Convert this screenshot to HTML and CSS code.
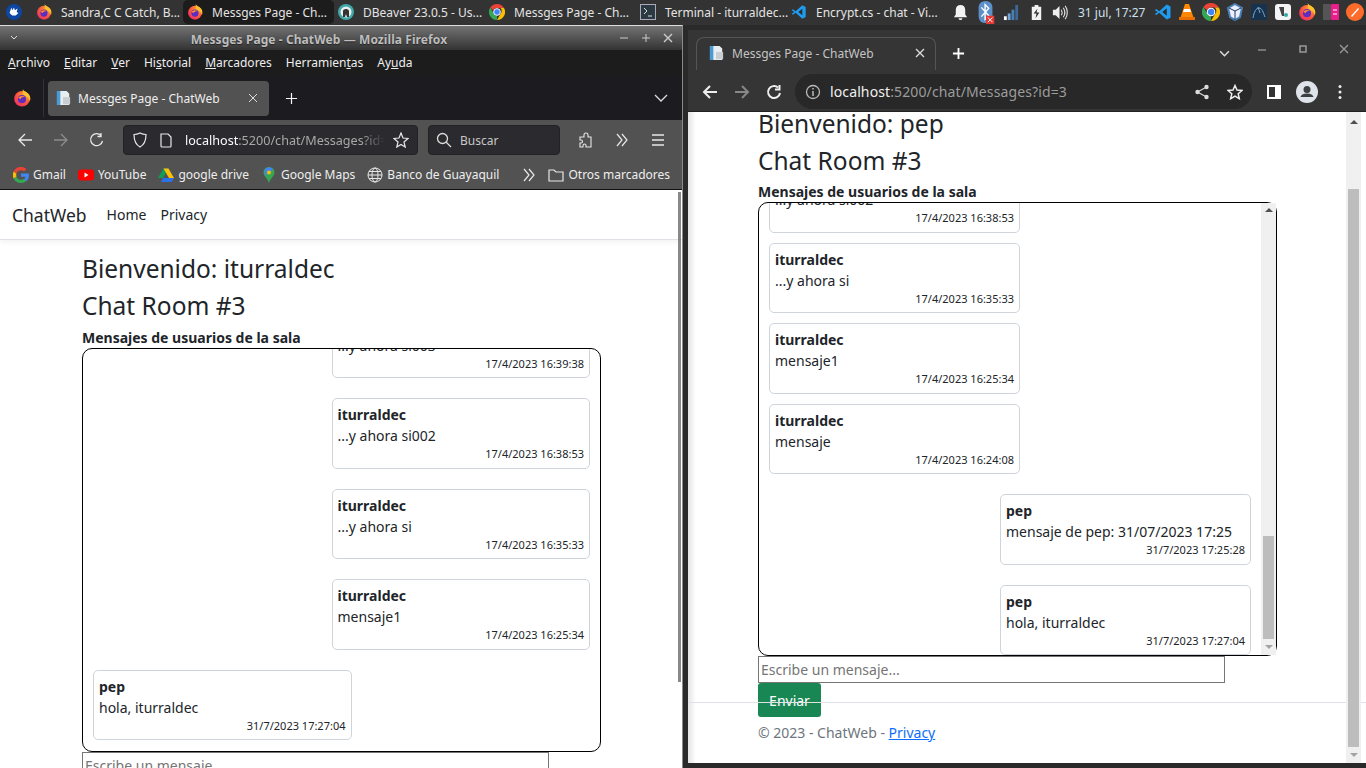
FILE: index.html
```html
<!DOCTYPE html>
<html lang="es">
<head>
<meta charset="utf-8">
<title>Messges Page - ChatWeb</title>
<link rel="stylesheet" href="styles.css">
</head>
<body>
<svg class="defs" aria-hidden="true">
  <defs>
    <radialGradient id="ffg" cx="0.7" cy="0.25" r="0.95"><stop offset="0" stop-color="#ffb02e"/><stop offset="0.5" stop-color="#ff5a3c"/><stop offset="1" stop-color="#e3226f"/></radialGradient>
    <symbol id="ff" viewBox="1.500 1 21 23"><circle cx="12" cy="13.500" r="10" fill="url(#ffg)"/><path d="M13 1c1 3 5 3 8 7 2 3 2 6 1 9-1-4-3-6-6-7-3-1-3-5-3-9z" fill="#ffc02e"/><circle cx="12" cy="14" r="5.200" fill="#5f2cc0"/><path d="M7 12c2-2 6-3 9-1-3 0-5 1-6 3z" fill="#ff8a2e"/></symbol>
    <symbol id="chrome" viewBox="2 2 20 20"><path d="M12 2a10 10 0 0 1 8.700 5H12a5 5 0 0 0-4.600 3L3.600 6.500A10 10 0 0 1 12 2z" fill="#ea4335"/><path d="M20.700 7A10 10 0 0 1 12 22l4.300-7.500a5 5 0 0 0-.1-7.500z" fill="#fbbc04"/><path d="M3.600 6.500 7.900 14a5 5 0 0 0 4.100 3l-.1 5A10 10 0 0 1 3.600 6.500z" fill="#34a853"/><circle cx="12" cy="12" r="4.200" fill="#4285f4" stroke="#fff" stroke-width="1.200"/></symbol>
    <symbol id="vscode" viewBox="0 0 24 24"><path d="M17 2 22 4.500v15L17 22 7 13l-4 3-2-1.500L5 12 1 9.500 3 8l4 3z" fill="#1f9cf0"/><path d="M17 7v10l-6-5z" fill="#2b2b2b"/></symbol>
    <symbol id="doc" viewBox="0 0 18 18"><path d="M2 1h8l3 3v13H2z" fill="#4a9ad4"/><path d="M6 1h7l3 3v13H6z" fill="#e8edf0"/><path d="M9 8h8v8H9z" fill="#c8ced2"/></symbol>
    <symbol id="g" viewBox="2 2 20 20"><path d="M22 12.200c0-.8-.1-1.400-.2-2H12v3.900h5.600a5 5 0 0 1-2.100 3.200l3.300 2.500c2-1.800 3.200-4.500 3.200-7.600z" fill="#4285f4"/><path d="M12 22c2.800 0 5-.9 6.800-2.500l-3.300-2.500c-.9.600-2.100 1-3.500 1a6 6 0 0 1-5.700-4.200l-3.400 2.600A10 10 0 0 0 12 22z" fill="#34a853"/><path d="M6.300 13.800a6 6 0 0 1 0-3.700L2.900 7.500a10 10 0 0 0 0 9z" fill="#fbbc05"/><path d="M12 6a5.500 5.500 0 0 1 3.800 1.500l2.900-2.900A10 10 0 0 0 2.900 7.500l3.400 2.600A6 6 0 0 1 12 6z" fill="#ea4335"/></symbol>
  </defs>
</svg>

<header class="taskbar">
  <svg class="start" viewBox="0 0 18 18"><circle cx="9" cy="9" r="9" fill="#0d47a1"/><path d="M4 10l2-6 1 3 2-3 1 3 3-2-1 4 2 1-3 3H7z" fill="#fff"/></svg>
  <div class="tasks">
    <div class="task"><svg class="ic16"><use href="#ff"/></svg><span>Sandra,C C Catch, B...</span></div>
    <div class="task on"><svg class="ic16"><use href="#ff"/></svg><span>Messges Page - Ch...</span></div>
    <div class="task"><svg class="ic16" viewBox="0 0 16 16"><circle cx="8" cy="8" r="8" fill="#3fa9a9"/><circle cx="8" cy="8" r="5.500" fill="#eee"/><path d="M5 13V7c0-2 5-3 6 0v6H9l-1-3-1 3z" fill="#333"/></svg><span>DBeaver 23.0.5 - Us...</span></div>
    <div class="task"><svg class="ic16"><use href="#chrome"/></svg><span>Messges Page - Ch...</span></div>
    <div class="task"><svg class="ic16" viewBox="0 0 16 16"><rect x="0.500" y="0.500" width="15" height="15" fill="#2b3a42" stroke="#aab"/><path d="M4 4l3 3-3 3M8 12h4" fill="none" stroke="#ddd"/></svg><span>Terminal - iturraldec...</span></div>
    <div class="task"><svg class="ic16"><use href="#vscode"/></svg><span>Encrypt.cs - chat - Vi...</span></div>
  </div>
  <div class="tray">
    <svg class="ic18" viewBox="0 0 18 18"><path d="M9 1c-3 0-5 2-5 5v5l-2 3h14l-2-3V6c0-3-2-5-5-5zM7 15h4a2 2 0 0 1-4 0z" fill="#f2f2f2"/></svg>
    <svg class="bt" viewBox="0 0 18 26"><rect x="1" y="1" width="15" height="24" rx="7" fill="#5d8fc9"/><path d="M4 8l8 9-4 4V5l4 4-8 9" fill="none" stroke="#fff" stroke-width="1.500"/><rect x="9" y="17" width="9" height="9" fill="#e53935"/><path d="M11 19l5 5m0-5-5 5" stroke="#fff"/></svg>
    <svg class="ic18" viewBox="0 0 18 18"><path d="M1 13h3v4H1z" fill="#fff"/><path d="M5 10h3v7H5z" fill="#6fa8dc"/><path d="M9 6h3v11H9z" fill="#4a7fb5"/><path d="M13 1h3v16h-3z" fill="#3b6896"/></svg>
    <svg class="ic18" viewBox="0 0 18 18"><path d="M7 1h4v2h3v14H4V3h3z" fill="#f2f2f2"/><path d="M10 5 6 10h3l-1 5 4-6H9z" fill="#2b2b2b"/></svg>
    <svg class="ic18 snd" viewBox="0 0 18 18"><path d="M2 6h3l4-4v14l-4-4H2z" fill="#eee"/><path d="M11 6c1 2 1 4 0 6m2-8c2 3 2 7 0 10m2-12c3 4 3 10 0 14" fill="none" stroke="#ddd" stroke-width="1.200"/></svg>
    <span class="clock">31 jul, 17:27</span>
    <div class="apps">
      <svg class="ic18"><use href="#vscode"/></svg>
      <svg class="ic18" viewBox="0 0 18 18"><path d="M7 1h4l5 15H2z" fill="#ff8800"/><path d="M6 6h6l1 3H5z" fill="#fff"/><rect x="1" y="14" width="16" height="3" fill="#e66f00"/></svg>
      <svg class="ic18"><use href="#chrome"/></svg>
      <svg class="ic18" viewBox="0 0 18 18"><path d="M9 1l7 4-2 9-5 3-5-3-2-9z" fill="#eef" stroke="#4a7fb5" stroke-width="2"/><path d="M9 8 3 5m6 3 6-3m-6 3v9" stroke="#183a61"/></svg>
      <svg class="ic18" viewBox="0 0 18 18"><rect x="1" y="1" width="16" height="16" rx="2" fill="#16324f"/><path d="M3 15c1-6 3-10 6-10s4 4 6 9M8 4l2 6" fill="none" stroke="#7fa7c9"/></svg>
      <svg class="ic18" viewBox="0 0 18 18"><rect x="1" y="1" width="16" height="16" rx="3" fill="#f4f4f4"/><path d="M5 4l3 9h2V4z" fill="#444"/><circle cx="12" cy="12" r="2" fill="#3aa"/></svg>
      <svg class="ic18"><use href="#ff"/></svg>
      <svg class="ic18" viewBox="0 0 18 18"><rect x="1" y="1" width="8" height="16" rx="1" fill="#555"/><rect x="9" y="1" width="8" height="16" rx="1" fill="#e91e8c"/><path d="M11 7h4M11 11h4" stroke="#fff"/></svg>
      <svg class="ic18" viewBox="0 0 18 18"><circle cx="9" cy="9" r="9" fill="#ff6b2b"/><path d="M5 13 12 5l1 1-7 8z" fill="#fff"/></svg>
    </div>
  </div>
</header>

<section class="win win-ff">
  <div class="titlebar">
    <svg class="wc" viewBox="0 0 10 10"><path d="M2 3l3 3 3-3" fill="none" stroke="#ddd"/></svg>
    <span class="title">Messges Page - ChatWeb — Mozilla Firefox</span>
    <svg class="wc" viewBox="0 0 10 10"><path d="M1 5h8" stroke="#ccc"/></svg>
    <svg class="wc" viewBox="0 0 10 10"><path d="M1 5h8M5 1v8" stroke="#ccc"/></svg>
    <svg class="wc" viewBox="0 0 10 10"><path d="M1 1l8 8m0-8-8 8" stroke="#ccc" stroke-width="1.400"/></svg>
  </div>
  <nav class="menubar">
    <span><u>A</u>rchivo</span><span><u>E</u>ditar</span><span><u>V</u>er</span><span>Hi<u>s</u>torial</span><span><u>M</u>arcadores</span><span>Herramien<u>t</u>as</span><span>Ay<u>u</u>da</span>
  </nav>
  <div class="ff-tabs">
    <div class="ff-home"><svg class="ic18"><use href="#ff"/></svg></div>
    <div class="ff-tab">
      <svg class="ic16"><use href="#doc"/></svg><span>Messges Page - ChatWeb</span>
      <svg class="ic10 push" viewBox="0 0 10 10"><path d="M1 1l8 8m0-8-8 8" stroke="#ddd"/></svg>
    </div>
    <svg class="ff-plus" viewBox="0 0 14 14"><path d="M7 1v12M1 7h12" stroke="#f5f5f5" stroke-width="1.300"/></svg>
    <svg class="ff-chev" viewBox="0 0 14 14"><path d="M1 4l6 6 6-6" fill="none" stroke="#ddd" stroke-width="1.300"/></svg>
  </div>
  <div class="ff-toolbar">
    <svg class="tb" viewBox="0 0 16 16"><path d="M15 8H2m6-6L2 8l6 6" fill="none" stroke="#e8e8e8" stroke-width="1.300"/></svg>
    <svg class="tb" viewBox="0 0 16 16"><path d="M1 8h13M8 2l6 6-6 6" fill="none" stroke="#8d8d8d" stroke-width="1.300"/></svg>
    <svg class="tb" viewBox="0 0 16 16"><path d="M13.500 9A6 6 0 1 1 12 3.500M12 1v3.500H8.500" fill="none" stroke="#e8e8e8" stroke-width="1.300"/></svg>
    <div class="ff-url">
      <svg class="ic16" viewBox="0 0 16 16"><path d="M8 1c2 1 4 1.500 6 1.500 0 6-1.500 10-6 12.500C3.500 12.500 2 8.500 2 2.500 4 2.500 6 2 8 1z" fill="none" stroke="#e8e8e8" stroke-width="1.200"/></svg>
      <svg class="ic16" viewBox="0 0 16 16"><path d="M3 2h7l3 3v9a1 1 0 0 1-1 1H4a1 1 0 0 1-1-1z" fill="none" stroke="#e8e8e8" stroke-width="1.200"/></svg>
      <span class="ff-addr">localhost<em>:5200/chat/Messages?id=</em></span>
      <svg class="ic16" viewBox="0 0 16 16"><path d="M8 1l2 5 5 .5-4 3.500 1.200 5L8 12.500 3.800 15 5 10 1 6.500 6 6z" fill="none" stroke="#e8e8e8" stroke-width="1.200"/></svg>
    </div>
    <div class="ff-search">
      <svg class="ic16" viewBox="0 0 16 16"><circle cx="6.500" cy="6.500" r="5" fill="none" stroke="#ddd" stroke-width="1.300"/><path d="M10 10l5 5" stroke="#ddd" stroke-width="1.300"/></svg>
      <span>Buscar</span>
    </div>
    <svg class="tb tb-ext" viewBox="0 0 16 16"><path d="M2 5h4V3a2 2 0 0 1 4 0v2h3v10H8v-1.500a1.500 1.500 0 0 0-3 0V15H2v-4h1a1.500 1.500 0 0 0 0-3H2z" fill="none" stroke="#e8e8e8" stroke-width="1.100"/></svg>
    <svg class="tb" viewBox="0 0 16 16"><path d="M3 2l5 6-5 6M8 2l5 6-5 6" fill="none" stroke="#e8e8e8" stroke-width="1.200"/></svg>
    <svg class="tb" viewBox="0 0 16 16"><path d="M2 3h12M2 8h12M2 13h12" stroke="#e8e8e8" stroke-width="1.300"/></svg>
  </div>
  <div class="ff-bookmarks">
    <div class="bm"><svg class="ic16"><use href="#g"/></svg><span>Gmail</span></div>
    <div class="bm"><svg class="ic16" viewBox="0 0 16 16"><rect y="2.500" width="16" height="11" rx="3" fill="#f00"/><path d="M6.500 5.500v5l4-2.500z" fill="#fff"/></svg><span>YouTube</span></div>
    <div class="bm"><svg class="ic16" viewBox="0 0 16 16"><path d="M5.500 1.500h5L5 11H0z" fill="#0f9d58"/><path d="M10.500 1.500 16 11h-5L5.500 1.500z" fill="#ffc107"/><path d="M3 15l2-4h11l-2.500 4z" fill="#2a71ea"/></svg><span>google drive</span></div>
    <div class="bm"><svg class="ic16" viewBox="0 0 16 16"><path d="M8 0a5.500 5.500 0 0 1 5.500 5.500C13.500 9 9.500 11 8 16 6.500 11 2.500 9 2.500 5.500A5.500 5.500 0 0 1 8 0z" fill="#34a853"/><path d="M4 2a5.500 5.500 0 0 1 8 0L4 9z" fill="#4285f4"/><circle cx="8" cy="5.500" r="2" fill="#fbbc04"/></svg><span>Google Maps</span></div>
    <div class="bm"><svg class="ic16" viewBox="0 0 16 16"><g fill="none" stroke="#e8e8e8"><circle cx="8" cy="8" r="7"/><ellipse cx="8" cy="8" rx="3" ry="7"/><path d="M1 8h14M2 4.500h12M2 11.500h12"/></g></svg><span>Banco de Guayaquil</span></div>
    <svg class="ic16 bm-more" viewBox="0 0 16 16"><path d="M3 2l5 6-5 6M8 2l5 6-5 6" fill="none" stroke="#e8e8e8" stroke-width="1.200"/></svg>
    <div class="bm"><svg class="ic16" viewBox="0 0 16 16"><path d="M1 3h5l2 2h7v9H1z" fill="none" stroke="#e8e8e8" stroke-width="1.200"/></svg><span>Otros marcadores</span></div>
  </div>
  <main class="page page-ff">
    <div class="site-nav">
      <span class="brand">ChatWeb</span><a class="nl">Home</a><a class="nl">Privacy</a>
    </div>
    <div class="wrap wrap-ff">
      <h3>Bienvenido: iturraldec</h3>
      <h3>Chat Room #3</h3>
      <div class="label">Mensajes de usuarios de la sala</div>
      <div class="box box-ff">
        <div class="msgs pad">
          <article class="card r"><b>iturraldec</b><p>...y ahora si003</p><time>17/4/2023 16:39:38</time></article>
          <article class="card r"><b>iturraldec</b><p>...y ahora si002</p><time>17/4/2023 16:38:53</time></article>
          <article class="card r"><b>iturraldec</b><p>...y ahora si</p><time>17/4/2023 16:35:33</time></article>
          <article class="card r"><b>iturraldec</b><p>mensaje1</p><time>17/4/2023 16:25:34</time></article>
          <article class="card"><b>pep</b><p>hola, iturraldec</p><time>31/7/2023 17:27:04</time></article>
        </div>
      </div>
      <input class="msg-input" placeholder="Escribe un mensaje...">
    </div>
    <div class="overlay-sb"></div>
  </main>
</section>

<section class="win win-ch">
  <div class="ch-tabs">
    <div class="ch-tab">
      <svg class="ic16"><use href="#doc"/></svg><span>Messges Page - ChatWeb</span>
      <svg class="ic10 push" viewBox="0 0 10 10"><path d="M1 1l8 8m0-8-8 8" stroke="#ddd" stroke-width="1.300"/></svg>
    </div>
    <svg class="ch-plus" viewBox="0 0 14 14"><path d="M7 1v12M1 7h12" stroke="#fff" stroke-width="2"/></svg>
    <svg class="ch-chev" viewBox="0 0 10 10"><path d="M1 3l4 4 4-4" fill="none" stroke="#ddd" stroke-width="1.400"/></svg>
    <svg class="ch-wc" viewBox="0 0 10 10"><path d="M1 6h8" stroke="#999" stroke-width="1.300"/></svg>
    <svg class="ch-wc" viewBox="0 0 10 10"><rect x="2" y="2" width="6" height="6" fill="none" stroke="#999" stroke-width="1.500"/></svg>
    <svg class="ch-wc" viewBox="0 0 10 10"><path d="M1 1l8 8m0-8-8 8" stroke="#999" stroke-width="1.300"/></svg>
  </div>
  <div class="ch-toolbar">
    <svg class="cb" viewBox="0 0 16 16"><path d="M15 8H2m6-6L2 8l6 6" fill="none" stroke="#eee" stroke-width="2"/></svg>
    <svg class="cb" viewBox="0 0 16 16"><path d="M1 8h13M8 2l6 6-6 6" fill="none" stroke="#888" stroke-width="2"/></svg>
    <svg class="cb" viewBox="0 0 16 16"><path d="M14 9A6 6 0 1 1 12 3.500M13.500 1v4.500H9" fill="none" stroke="#eee" stroke-width="2"/></svg>
    <div class="omni">
      <svg class="ic16" viewBox="0 0 16 16"><circle cx="8" cy="8" r="6.500" fill="none" stroke="#bbb" stroke-width="1.300"/><path d="M8 7v5M8 4v1.600" stroke="#bbb" stroke-width="1.500"/></svg>
      <span class="ch-addr">localhost<em>:5200/chat/Messages?id=3</em></span>
      <svg class="ic16 push" viewBox="0 0 16 16"><circle cx="3.500" cy="8" r="2.200" fill="#ddd"/><circle cx="12.500" cy="3" r="2.200" fill="#ddd"/><circle cx="12.500" cy="13" r="2.200" fill="#ddd"/><path d="M3.500 8l9-5m-9 5 9 5" stroke="#ddd" stroke-width="1.200"/></svg>
      <svg class="ic16 star" viewBox="0 0 16 16"><path d="M8 1.500l2 4.500 5 .5-3.800 3.300 1.100 4.900L8 12.200l-4.300 2.500 1.100-4.900L1 6.500 6 6z" fill="none" stroke="#eee" stroke-width="1.500"/></svg>
    </div>
    <svg class="ch-panel" viewBox="0 0 18 18"><rect x="2" y="2" width="14" height="14" fill="#fff"/><rect x="4" y="4" width="6" height="10" fill="#333"/></svg>
    <svg class="ch-avatar" viewBox="0 0 22 22"><circle cx="11" cy="11" r="11" fill="#dfe3ea"/><circle cx="11" cy="8.500" r="3.500" fill="#3c4043"/><path d="M4.500 16c1-3 4-3.500 6.500-3.500s5.500.5 6.500 3.500z" fill="#3c4043"/></svg>
    <svg class="ch-more" viewBox="0 0 4 16"><circle cx="2" cy="2.500" r="1.500" fill="#eee"/><circle cx="2" cy="8" r="1.500" fill="#eee"/><circle cx="2" cy="13.500" r="1.500" fill="#eee"/></svg>
  </div>
  <main class="page page-ch">
    <div class="wrap wrap-ch">
      <h3>Bienvenido: pep</h3>
      <h3>Chat Room #3</h3>
      <div class="label">Mensajes de usuarios de la sala</div>
      <div class="box box-ch">
        <div class="msgs">
          <article class="card tight"><b>iturraldec</b><p>...y ahora si002</p><time>17/4/2023 16:38:53</time></article>
          <article class="card tight"><b>iturraldec</b><p>...y ahora si</p><time>17/4/2023 16:35:33</time></article>
          <article class="card tight"><b>iturraldec</b><p>mensaje1</p><time>17/4/2023 16:25:34</time></article>
          <article class="card"><b>iturraldec</b><p>mensaje</p><time>17/4/2023 16:24:08</time></article>
          <article class="card r"><b>pep</b><p>mensaje de pep: 31/07/2023 17:25</p><time>31/7/2023 17:25:28</time></article>
          <article class="card r"><b>pep</b><p>hola, iturraldec</p><time>31/7/2023 17:27:04</time></article>
        </div>
        <div class="sb sb-box"><i class="up"></i><i class="thumb"></i><i class="down"></i></div>
      </div>
      <input class="msg-input" placeholder="Escribe un mensaje...">
      <button class="send">Enviar</button>
    </div>
    <footer class="foot">© 2023 - ChatWeb - <a class="lnk">Privacy</a></footer>
    <div class="sb sb-page"><i class="up"></i><i class="thumb"></i><i class="down"></i></div>
  </main>
</section>
</body>
</html>
```
FILE: styles.css
```css
* { box-sizing: border-box; }
html, body { margin: 0; height: 100%; }
body {
  position: relative;
  width: 1366px;
  height: 768px;
  overflow: hidden;
  background: #2a2a2a;
  font-family: "Noto Sans", "Open Sans", sans-serif;
  font-size: 12px;
}
svg { display: block; flex: none; }
.defs { position: absolute; width: 0; height: 0; }
.ic10 { width: 10px; height: 10px; }
.ic16 { width: 16px; height: 16px; }
.ic18 { width: 18px; height: 18px; }
.push { margin-left: auto; }
em { font-style: normal; }

/* taskbar */
.taskbar {
  height: 25px;
  background: #333;
  color: #e4e4e4;
  display: flex;
  align-items: flex-start;
  padding-left: 6px;
}
.start { width: 16px; height: 16px; margin: 4px 10px 0 0; }
.tasks { display: flex; width: 906px; }
.task {
  width: 151px;
  height: 24px;
  display: flex;
  align-items: center;
  gap: 9px;
  padding-left: 4px;
  border-radius: 5px;
  white-space: nowrap;
  font-size: 12px;
}
.task.on { background: #1c1c1c; }
.tray { display: flex; align-items: center; height: 24px; margin-left: 14px; gap: 8px; }
.tray > .ic18 { width: 17px; height: 17px; }
.tray > .snd { margin-left: -2px; margin-right: 2px; }
.bt { width: 18px; height: 24px; }
.clock { color: #cfe0ee; white-space: nowrap; font-size: 12px; margin-right: 1px; }
.apps { display: flex; gap: 6px; }

/* windows on the desktop */
.win { position: absolute; top: 25px; height: 743px; width: 683px; display: flex; flex-direction: column; }
.win-ff { left: 0; background: #1c1b1f; border-right: 1px solid #8a8a8a; border-top: 1px solid #ddd; }
.win-ch { left: 683px; background: #2a2a2a; padding: 5px 0 5px 5px; }

/* firefox */
.titlebar {
  height: 24px;
  flex: none;
  display: flex;
  align-items: center;
  gap: 12px;
  padding: 0 9px;
  background: linear-gradient(#737373, #333);
}
.wc { width: 10px; height: 10px; }
.title {
  flex: 1;
  text-align: center;
  color: #bdbdbd;
  font-weight: 700;
  font-size: 12px;
  letter-spacing: .08px;
  text-shadow: 0 1px 1px #222, 0 0 2px #555;
  padding-top: 2px;
  white-space: nowrap;
}
.menubar {
  height: 26px;
  flex: none;
  display: flex;
  align-items: center;
  gap: 14px;
  padding: 0 0 1px 8px;
  color: #eee;
  background: #1c1c1c;
}
.ff-tabs {
  height: 44px;
  flex: none;
  display: flex;
  align-items: center;
  background: #1c1b1f;
  color: #eee;
}
.ff-home { width: 44px; height: 38px; display: flex; align-items: center; justify-content: center; border-right: 1px solid #333; margin-right: 4px; }
.ff-tab {
  width: 221px;
  height: 35px;
  display: flex;
  align-items: center;
  gap: 7px;
  padding: 0 11px 0 7px;
  background: #525252;
  border-radius: 4px;
}
.ff-plus { width: 13px; height: 13px; margin-left: 16px; }
.ff-chev { width: 14px; height: 14px; margin-left: auto; margin-right: 14px; }
.ff-toolbar {
  height: 40px;
  flex: none;
  display: flex;
  align-items: center;
  background: #525252;
  padding-left: 17px;
  gap: 20px;
}
.tb { width: 16px; height: 16px; }
.ff-url {
  width: 295px;
  height: 30px;
  margin-left: -2px;
  display: flex;
  align-items: center;
  gap: 10px;
  padding: 0 8px;
  background: #2b2a2e;
  border: 1px solid #222;
  border-radius: 4px;
  color: #fbfbfe;
  white-space: nowrap;
}
.ff-addr {
  flex: 1;
  min-width: 0;
  overflow: hidden;
  font-size: 12.600px;
  margin-left: 1px;
  margin-right: -2px;
  -webkit-mask-image: linear-gradient(90deg, #000 88%, transparent);
  mask-image: linear-gradient(90deg, #000 88%, transparent);
}
.ff-addr em { color: #a8a8a8; }
.ff-search {
  width: 132px;
  height: 30px;
  margin-left: -10px;
  display: flex;
  align-items: center;
  gap: 8px;
  padding: 0 7px;
  background: #2b2a2e;
  border: 1px solid #222;
  border-radius: 4px;
  color: #c8c8c8;
}
.tb-ext { margin-left: -2px; }
.ff-bookmarks {
  height: 30px;
  flex: none;
  display: flex;
  align-items: center;
  gap: 12px;
  padding-left: 13px;
  background: #525252;
  border-bottom: 1px solid #111;
  color: #eee;
}
.bm { display: flex; align-items: center; gap: 4px; white-space: nowrap; }
.bm-more { margin-left: 10px; margin-right: -1px; }

/* web pages */
.page { position: relative; flex: 1; background: #fff; color: #212529; overflow: hidden; font-size: 14px; }
.site-nav {
  height: 50px;
  display: flex;
  align-items: center;
  padding-left: 12px;
  gap: 14px;
  border-bottom: 1px solid #dee2e6;
  box-shadow: 0 2px 6px rgba(0, 0, 0, .06);
}
.brand { font-size: 17.500px; margin-right: 6px; }
.nl { font-size: 14px; }
.wrap-ff { padding: 14px 0 0 82px; }
.wrap-ch { padding-left: 70px; margin-top: -3.500px; }
h3 { margin: 0 0 8px; font-size: 24.500px; font-weight: 400; line-height: 1.2; }
.label { font-weight: 700; line-height: 21px; margin-bottom: -.2px; }
.wrap-ff .label { margin-top: -2px; }
.wrap-ch .label { margin-top: -2.500px; }
.box { display: flex; width: 519px; border: 1px solid #000; border-radius: 10px; background: #fff; }
.box-ff { height: 404px; }
.box-ch { height: 454px; }
.msgs { flex: 1; min-width: 0; display: flex; flex-direction: column; justify-content: flex-end; overflow: hidden; padding: 0 10px; border-radius: 10px; }
.msgs.pad { padding-bottom: 10.500px; }
.card {
  flex: none;
  width: 258.500px;
  height: 70.500px;
  margin-bottom: 20px;
  padding: 5px;
  border: 1px solid #ced4da;
  border-radius: 5px;
  background: #fff;
}
.box-ch .card { width: 251px; }
.card:last-child { margin-bottom: 0; }
.box-ch .card:last-child { margin-bottom: -.5px; }
.card.tight { margin-bottom: 10px; }
.card.r { align-self: flex-end; }
.card b { display: block; line-height: 21px; }
.card p { margin: 0; line-height: 21px; }
.card time { display: block; text-align: right; font-size: 11px; line-height: 16.500px; }
.msg-input { display: block; width: 467px; height: 27px; padding: 1px 2px; border: 1px solid #767676; border-radius: 0; font: inherit; background: #fff; outline: 0; }
.msg-input::placeholder { color: #757575; }
.send {
  display: block;
  width: 63px;
  height: 34px;
  background: #198754;
  color: #fff;
  border: 0;
  border-radius: 3px;
  font: inherit;
  padding: 2px 0 0;
}
.foot {
  position: absolute;
  left: 0;
  right: 0;
  top: 590px;
  height: 61px;
  padding: 19px 0 0 70px;
  border-top: 1px solid #dee2e6;
  color: #6c757d;
  line-height: 21px;
}
.lnk { color: #0d6efd; text-decoration: underline; }
.page-ch::before {
  content: "";
  position: absolute;
  left: 0;
  top: 0;
  bottom: 0;
  width: 8px;
  background: linear-gradient(90deg, #e4e4e4, #fff);
}
.overlay-sb { position: absolute; right: 1px; top: 2px; width: 3px; height: 490px; background: #888; }

/* classic scrollbars */
.sb { display: flex; flex-direction: column; flex: none; width: 15px; background: #f0f0f0; align-items: center; }
.sb .up, .sb .down { width: 0; height: 0; border-left: 4px solid transparent; border-right: 4px solid transparent; }
.sb .up { border-bottom: 4px solid #505050; margin-top: 5px; }
.sb .down { border-top: 4px solid #a3a3a3; margin: 6px 0; }
.sb .thumb { width: 11px; margin-top: auto; background: #bdbdbd; }
.sb-box .thumb { height: 103px; }
.sb-page { position: absolute; right: 5px; top: 0; bottom: 0; }
.sb-page .up { margin-top: 8px; }
.sb-page .thumb { height: 558px; }

/* chrome */
.ch-tabs {
  height: 40px;
  flex: none;
  display: flex;
  align-items: flex-end;
  background: #353535;
  color: #c4c4c4;
  padding-left: 8px;
}
.ch-tab {
  width: 240px;
  height: 33px;
  display: flex;
  align-items: center;
  gap: 8px;
  padding: 0 10px 2px 11px;
  border: 1px solid #555;
  border-bottom: 0;
  border-radius: 8px 8px 0 0;
  background: #353535;
  white-space: nowrap;
}
.ch-plus { width: 13px; height: 13px; margin: 0 0 10px 16px; }
.ch-chev { width: 11px; height: 11px; margin: 0 0 11px 254px; }
.ch-wc { width: 10px; height: 10px; margin: 0 0 16px 27px; }
.ch-wc + .ch-wc { margin-left: 31px; }
.ch-toolbar {
  height: 42px;
  flex: none;
  display: flex;
  align-items: center;
  background: #353535;
  padding: 2px 0 0 14px;
  border-bottom: 1px solid #222;
}
.cb { width: 16px; height: 16px; margin-right: 16px; }
.omni {
  width: 457px;
  height: 35px;
  margin-left: -3px;
  display: flex;
  align-items: center;
  gap: 9px;
  padding: 0 9px 0 10px;
  background: #282828;
  border-radius: 18px;
}
.ch-addr { font-size: 14px; letter-spacing: .12px; color: #f0f0f0; white-space: nowrap; }
.ch-addr em { color: #9c9c9c; }
.star { margin-left: 8px; }
.ch-panel { width: 18px; height: 18px; margin-left: 13px; }
.ch-avatar { width: 22px; height: 22px; margin-left: 13px; }
.ch-more { width: 4px; height: 16px; margin-left: 20px; }
```
